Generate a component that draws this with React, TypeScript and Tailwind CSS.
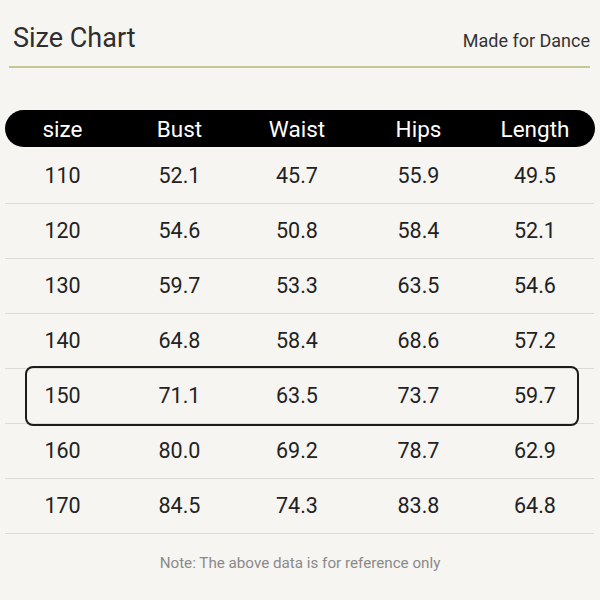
import React from "react";

const headers = ["size", "Bust", "Waist", "Hips", "Length"];
const rows = [
  ["110", "52.1", "45.7", "55.9", "49.5"],
  ["120", "54.6", "50.8", "58.4", "52.1"],
  ["130", "59.7", "53.3", "63.5", "54.6"],
  ["140", "64.8", "58.4", "68.6", "57.2"],
  ["150", "71.1", "63.5", "73.7", "59.7"],
  ["160", "80.0", "69.2", "78.7", "62.9"],
  ["170", "84.5", "74.3", "83.8", "64.8"],
];

export default function App() {
  return (
    <div
      className="w-[600px] h-[600px] bg-[#f6f5f1] overflow-hidden flex flex-col"
      style={{ fontFamily: "Roboto, 'Liberation Sans', sans-serif" }}
    >
      <div className="flex items-baseline justify-between pl-[13px] pr-[10px] pt-[22px]">
        <div className="text-[27px] leading-[32px] text-[#2e2e2e]">Size Chart</div>
        <div className="text-[18px] leading-[22px] text-[#333333]">Made for Dance</div>
      </div>
      <div className="mt-[12px] ml-[9px] w-[581px] h-[2px] bg-[#c6c891]" />

      <div className="mt-[42px] ml-[5px] w-[590px] flex flex-col">
        <div className="h-[37px] bg-black rounded-full grid grid-cols-[115px_119px_116px_127px_106px] items-center text-white text-[22.5px] leading-[24px]">
          {headers.map((h) => (
            <div key={h} className="text-center">
              {h}
            </div>
          ))}
        </div>
        <div className="mt-[2px] flex flex-col w-[589px]">
          {rows.map((r, i) => (
            <div
              key={r[0]}
              className="relative h-[55px] border-b border-[#dcdbd6] grid grid-cols-[115px_119px_116px_127px_106px] items-center text-[21.5px] leading-[24px] text-[#222222]"
            >
              {r.map((c, j) => (
                <div key={j} className="text-center">
                  {c}
                </div>
              ))}
              {i === 4 && (
                <div className="absolute left-[20px] right-[15px] top-[-3px] bottom-[-3px] border-2 border-[#1c1c1c] rounded-[8px]" />
              )}
            </div>
          ))}
        </div>
      </div>

      <div className="mt-[19px] text-center text-[15.2px] leading-[20px] text-[#8a8a8a]">
        Note: The above data is for reference only
      </div>
    </div>
  );
}
